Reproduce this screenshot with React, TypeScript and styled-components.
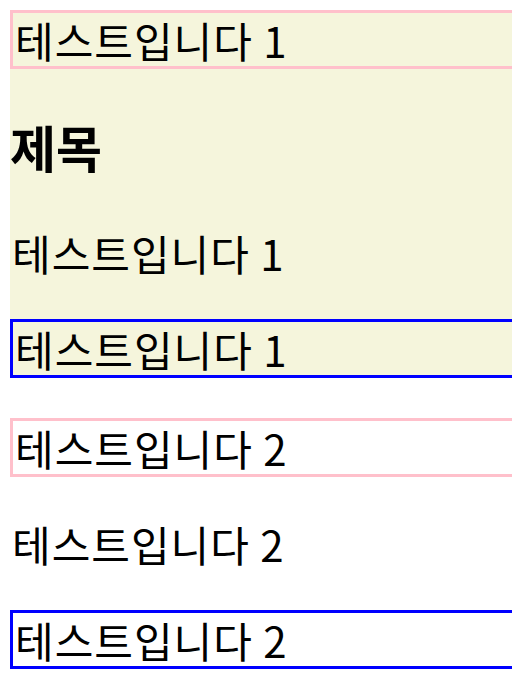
import React from "react";
import styled, { createGlobalStyle } from "styled-components";

const GlobalStyle = createGlobalStyle`
  html, body {
    margin: 0;
    padding: 0;
    overflow: hidden;
    background: #ffffff;
  }
  body {
    font-family: "Noto Sans CJK KR", "Noto Sans", sans-serif;
    color: #000000;
  }
`;

const Page = styled.div`
  padding: 10px 0 0 10px;
  width: 560px;
`;

const Section = styled.section<{ $bg?: string }>`
  background: ${(p) => p.$bg || "transparent"};

  & + & {
    margin-top: 40px;
  }
`;

const Box = styled.div<{ $color: string }>`
  border: 3px solid ${(p) => p.$color};
  font-size: 42px;
  line-height: 53px;
  letter-spacing: 1px;
  padding-left: 2px;
`;

const Title = styled.h1`
  margin: 45px 0 48px;
  font-size: 50px;
  line-height: 64px;
  font-weight: 700;
`;

const Text = styled.p`
  margin: 40px 0;
  font-size: 42px;
  line-height: 53px;
  letter-spacing: 1px;
  padding-left: 2px;
`;

const App: React.FC = () => {
  return (
    <Page>
      <GlobalStyle />
      <Section $bg="#f5f5dc">
        <Box $color="pink">테스트입니다 1</Box>
        <Title>제목</Title>
        <Text>테스트입니다 1</Text>
        <Box $color="blue">테스트입니다 1</Box>
      </Section>
      <Section>
        <Box $color="pink">테스트입니다 2</Box>
        <Text>테스트입니다 2</Text>
        <Box $color="blue">테스트입니다 2</Box>
      </Section>
    </Page>
  );
};

export default App;
